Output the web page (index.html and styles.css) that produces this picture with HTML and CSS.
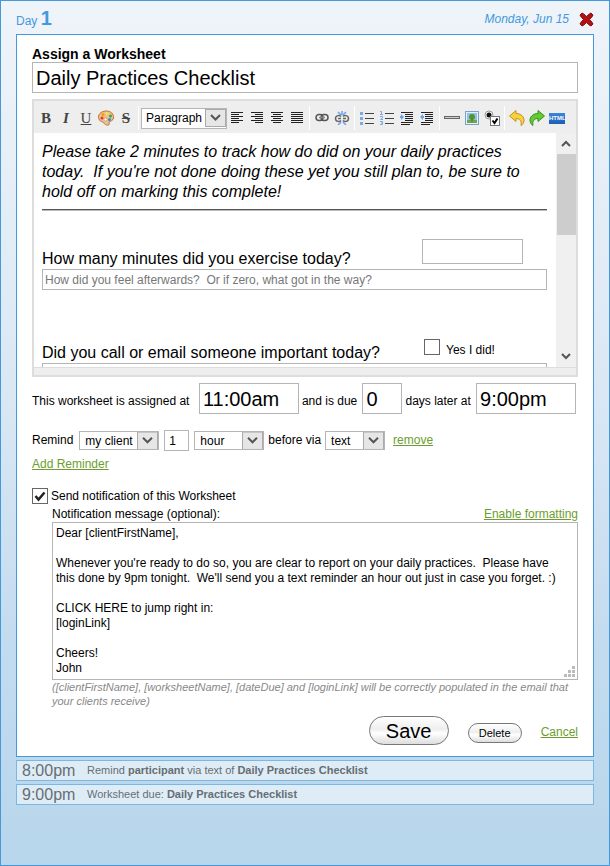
FILE: index.html
```html
<!DOCTYPE html>
<html lang="en">
<head>
    <meta charset="UTF-8">
    <meta name="viewport" content="width=device-width, initial-scale=1.0">
    <title>Assign a Worksheet</title>
    <link rel="stylesheet" href="styles.css">
</head>
<body>
    <div class="day">
        <div class="day-header">
            <h1>Day <b>1</b></h1>
            <span class="date">Monday, Jun 15</span>
            <button type="button" class="close" aria-label="Remove day">
                <svg width="15" height="15" viewBox="0 0 15 15"><path d="M1 3 3 1Q4 1 7.500 4.500 11 1 12 1L14 3Q14 4 10.500 7.500 14 11 14 12L12 14Q11 14 7.500 10.500 4 14 3 14L1 12Q1 11 4.500 7.500 1 4 1 3Z" fill="#b01214" stroke="#8c0c10"/></svg>
            </button>
        </div>

        <form class="panel">
            <label class="title-label" for="title">Assign a Worksheet</label>
            <input type="text" id="title" class="big" value="Daily Practices Checklist">

            <div class="editor">
                <div class="toolbar">
                    <button type="button" class="glyph bold">B</button>
                    <button type="button" class="glyph italic">I</button>
                    <button type="button" class="glyph underline">U</button>
                    <button type="button" aria-label="Text color">
                        <svg width="18" height="16" viewBox="0 0 18 16"><path d="M2 9C0 5 4 1 9 1c5 0 8 3 7.500 7-.5 3-3 3-4 3.500-1 1 .5 2.500-1 3.500-3 1-5-3-7-3.500C3 11 2.500 10.500 2 9Z" fill="#eec08c" stroke="#b97532"/><circle cx="5" cy="8" r="1.500" fill="#e33"/><circle cx="6" cy="4.500" r="1.500" fill="#f39a25"/><circle cx="10" cy="3.500" r="1.500" fill="#f4e53b"/><circle cx="13.500" cy="6" r="1.500" fill="#35a853"/><circle cx="12.500" cy="9.500" r="1.500" fill="#3187d8"/><circle cx="8.500" cy="9.500" r="1.500" fill="#fff" stroke="#b97532" stroke-width=".5"/></svg>
                    </button>
                    <button type="button" class="glyph strike">S</button>
                    <span class="sep"></span>
                    <select class="format" aria-label="Format"><option>Paragraph</option></select>
                    <button type="button" aria-label="Align left">
                        <svg width="12" height="12" viewBox="0 0 12 12" stroke="#222"><path d="M0 .5h12M0 2.500h8M0 4.500h12M0 6.500h8M0 8.500h12M0 10.500h8"/></svg>
                    </button>
                    <button type="button" aria-label="Align right">
                        <svg width="12" height="12" viewBox="0 0 12 12" stroke="#222"><path d="M0 .5h12M4 2.500h8M0 4.500h12M4 6.500h8M0 8.500h12M4 10.500h8"/></svg>
                    </button>
                    <button type="button" aria-label="Align center">
                        <svg width="12" height="12" viewBox="0 0 12 12" stroke="#222"><path d="M0 .5h12M2 2.500h8M0 4.500h12M2 6.500h8M0 8.500h12M2 10.500h8"/></svg>
                    </button>
                    <button type="button" aria-label="Justify">
                        <svg width="12" height="12" viewBox="0 0 12 12" stroke="#222"><path d="M0 .5h12M0 2.500h12M0 4.500h12M0 6.500h12M0 8.500h12M0 10.500h12"/></svg>
                    </button>
                    <span class="sep"></span>
                    <button type="button" aria-label="Insert link">
                        <svg width="14" height="14" viewBox="0 0 14 14" fill="none" stroke="#555" stroke-width="1.500"><rect x="1" y="3.500" width="7" height="6" rx="3"/><rect x="6" y="3.500" width="7" height="6" rx="3"/><path d="M4 6.500h6" stroke="#888"/></svg>
                    </button>
                    <button type="button" aria-label="Remove link">
                        <svg width="16" height="14" viewBox="0 0 16 14" fill="none"><path d="M7 5.500C6 4 1.500 4 1.500 7.500S6 11 7 9.500M4 7.500h3M9 5.500C10 4 14.500 4 14.500 7.500S10 11 9 9.500M9 7.500h3" stroke="#666" stroke-width="1.500"/><path d="M4 1l3 3M8 0v4M12 1 9 4M4 14l3-3M12 14l-3-3" stroke="#6aa3ee" stroke-width="1.500"/></svg>
                    </button>
                    <span class="sep"></span>
                    <button type="button" aria-label="Bulleted list">
                        <svg width="14" height="14" viewBox="0 0 14 14"><path d="M0 1h3v3H0zM0 6h3v3H0zM0 11h3v3H0z" fill="#7fa9e4"/><path d="M5 2.500h9M5 7.500h9M5 12.500h9" stroke="#444"/></svg>
                    </button>
                    <button type="button" aria-label="Numbered list">
                        <svg width="14" height="14" viewBox="0 0 14 14" fill="none"><path d="M0 .5h1.500v3M0 3.500h3M0 5.500h2.500v1.500L.5 8.500H3M0 10.500h2.500v3H0M1 12h1.500" stroke="#7fa9e4"/><path d="M5 2.500h9M5 7.500h9M5 12.500h9" stroke="#444"/></svg>
                    </button>
                    <button type="button" aria-label="Indent">
                        <svg width="14" height="13" viewBox="0 0 14 13"><path d="M1 .5h12M5 2.500h8M5 4.500h8M5 6.500h8M5 8.500h8M1 10.500h12M1 12.500h9" stroke="#222"/><path d="M0 4h1V2l3 3-3 3V6H0z" fill="#6aa3ee"/></svg>
                    </button>
                    <button type="button" aria-label="Outdent">
                        <svg width="14" height="13" viewBox="0 0 14 13"><path d="M1 .5h12M5 2.500h8M5 4.500h8M5 6.500h8M5 8.500h8M1 10.500h12M1 12.500h9" stroke="#222"/><path d="M4 4H3V2L0 5l3 3V6h1z" fill="#6aa3ee"/></svg>
                    </button>
                    <span class="sep"></span>
                    <button type="button" aria-label="Horizontal rule">
                        <svg width="16" height="4" viewBox="0 0 16 4"><rect x=".5" y=".5" width="15" height="2" fill="#ccc" stroke="#666"/></svg>
                    </button>
                    <button type="button" aria-label="Insert image">
                        <svg width="14" height="14" viewBox="0 0 14 14"><rect x=".5" y=".5" width="13" height="13" fill="#e8f0fa" stroke="#7f9fc9"/><path d="M2 2h10v10H2z" fill="#8fc1f0"/><path d="M2 9h10v3H2z" fill="#6aa84f"/><circle cx="7" cy="6" r="3" fill="#4d9a2c"/><path d="M7 8v3" stroke="#8a5a1a"/></svg>
                    </button>
                    <button type="button" aria-label="Insert field">
                        <svg width="16" height="16" viewBox="0 0 16 16"><circle cx="5" cy="5" r="4" fill="#fff" stroke="#999"/><circle cx="5" cy="5" r="2.500" fill="#111"/><rect x="6.500" y="6.500" width="9" height="9" fill="#fff" stroke="#777"/><path d="m8.500 10.500 2 2.500 3-4.500" fill="none" stroke="#000" stroke-width="2"/></svg>
                    </button>
                    <span class="sep"></span>
                    <button type="button" aria-label="Undo">
                        <svg width="16" height="16" viewBox="0 0 16 16"><path d="M.5 6 7 .5v3c5 0 8.500 3.500 8 7.500-.5 2.500-1.500 3.500-3 4.500 1-4-1-7-5-7v3z" fill="#f7d23c" stroke="#c0921c"/></svg>
                    </button>
                    <button type="button" aria-label="Redo">
                        <svg width="16" height="16" viewBox="0 0 16 16"><path d="M15.500 6 9 .5v3C4 3.500.5 7 1 11c.5 2.500 1.500 3.500 3 4.500-1-4 1-7 5-7v3z" fill="#62cc2e" stroke="#3a8c24"/></svg>
                    </button>
                    <button type="button" class="source"><span>HTML</span></button>
                </div>
                <div class="editor-body">
                    <div class="document">
                        <p class="intro">Please take 2 minutes to track how do did on your daily practices today.&nbsp; If you're not done doing these yet you still plan to, be sure to hold off on marking this complete!</p>
                        <hr>
                        <div class="question">
                            <label for="minutes">How many minutes did you exercise today?</label>
                            <div class="answer"><input type="text" id="minutes"></div>
                        </div>
                        <input type="text" class="comment" aria-label="Exercise comment" placeholder="How did you feel afterwards?&nbsp; Or if zero, what got in the way?">
                        <div class="question">
                            <span>Did you call or email someone important today?</span>
                            <div class="answer check"><input type="checkbox" id="called"><label for="called">Yes I did!</label></div>
                        </div>
                        <input type="text" class="comment" aria-label="Call comment">
                    </div>
                    <div class="scrollbar">
                        <svg width="10" height="7" viewBox="0 0 10 7"><path d="m1 6 4-4 4 4" fill="none" stroke="#555" stroke-width="2"/></svg>
                        <div class="thumb"></div>
                        <svg width="10" height="7" viewBox="0 0 10 7"><path d="m1 1 4 4 4-4" fill="none" stroke="#555" stroke-width="2"/></svg>
                    </div>
                </div>
                <div class="statusbar"></div>
            </div>

            <div class="schedule">
                <label class="assigned-label" for="assigned">This worksheet is assigned at</label>
                <input type="text" id="assigned" class="big time-input" value="11:00am">
                <label for="days">and is due</label>
                <input type="text" id="days" class="big days-input" value="0">
                <label for="due">days later at</label>
                <input type="text" id="due" class="big time-input" value="9:00pm">
            </div>

            <div class="reminder">
                <label for="who">Remind</label>
                <select id="who" class="who"><option>my client</option></select>
                <input type="text" class="amount" aria-label="Amount" value="1">
                <select class="unit" aria-label="Unit"><option>hour</option></select>
                <label for="via">before via</label>
                <select id="via" class="via"><option>text</option></select>
                <a href="#" class="remove">remove</a>
            </div>
            <a href="#" class="add">Add Reminder</a>

            <div class="notify">
                <input type="checkbox" id="notify" checked>
                <label for="notify">Send notification of this Worksheet</label>
            </div>
            <div class="message">
                <div class="message-header">
                    <label for="message">Notification message (optional):</label>
                    <a href="#">Enable formatting</a>
                </div>
                <div class="message-box">
                    <textarea id="message" rows="10">Dear [clientFirstName],

Whenever you're ready to do so, you are clear to report on your daily practices.  Please have this done by 9pm tonight.  We'll send you a text reminder an hour out just in case you forget. :)

CLICK HERE to jump right in:
[loginLink]

Cheers!
John</textarea>
                    <svg class="grip" width="11" height="11" viewBox="0 0 11 11" fill="#bbb"><path d="M8 0h3v3H8zM4 4h3v3H4zM8 4h3v3H8zM0 8h3v3H0zM4 8h3v3H4zM8 8h3v3H8z"/></svg>
                </div>
                <p class="hint">([clientFirstName], [worksheetName], [dateDue] and [loginLink] will be correctly populated in the email that your clients receive)</p>
            </div>

            <div class="actions">
                <button type="submit" class="pill save">Save</button>
                <button type="button" class="pill delete">Delete</button>
                <a href="#">Cancel</a>
            </div>
        </form>

        <div class="event">
            <span class="event-time">8:00pm</span>
            <span>Remind <b>participant</b> via text of <b>Daily Practices Checklist</b></span>
        </div>
        <div class="event">
            <span class="event-time">9:00pm</span>
            <span>Worksheet due: <b>Daily Practices Checklist</b></span>
        </div>
    </div>
</body>
</html>
```
FILE: styles.css
```css
* {
    box-sizing: border-box;
}
body {
    margin: 0;
    font-family: "Liberation Sans", Arial, sans-serif;
    font-size: 12px;
    line-height: 15px;
    color: #000;
}
input, select, textarea, button {
    font-family: inherit;
    font-size: 12px;
    color: #000;
    margin: 0;
}
input[type="text"], textarea {
    background: #fff;
    border: 1px solid #b5b5b5;
    border-radius: 0;
    padding: 0 4px;
}
button {
    border: none;
    background: none;
    padding: 0;
}
a {
    color: #6b9e2e;
}
.day {
    min-height: 100vh;
    padding: 0 15px 15px;
    border: 1px solid #4499dd;
    background: linear-gradient(#eff4f9, #dae8f4 45%, #c3dbef 75%, #b7d6eb);
}
.day-header {
    display: flex;
    align-items: center;
    height: 33px;
    padding-top: 4px;
    color: #4499dd;
}
.day-header h1 {
    flex: 1;
    margin: 0;
    font-size: 12px;
    font-weight: normal;
    line-height: 24px;
}
.day-header h1 b {
    font-size: 20px;
}
.date {
    font-style: italic;
}
.close {
    display: flex;
    margin-left: 10px;
}
.panel {
    padding: 11px 15px;
    background: #fff;
    border: 1px solid #4499dd;
}
.title-label {
    display: block;
    font-size: 14px;
    font-weight: bold;
    line-height: 16px;
}
input.big {
    width: 100%;
    height: 31px;
    padding: 1px 3px 0;
    font-size: 20px;
}

/* editor */
.editor {
    margin: 6px 0;
    border: 2px solid #ddd;
}
.toolbar {
    display: flex;
    align-items: center;
    height: 32px;
    padding: 2px 2px 0;
    background: #eee;
}
.toolbar button {
    display: flex;
    align-items: center;
    justify-content: center;
    width: 20px;
    height: 20px;
}
.toolbar .glyph {
    font-family: "Liberation Serif", serif;
    font-size: 15px;
    color: #444;
}
.toolbar .bold {
    font-weight: bold;
}
.toolbar .italic {
    font-style: italic;
    font-weight: bold;
}
.toolbar .underline {
    text-decoration: underline;
}
.toolbar .strike {
    font-weight: bold;
    text-decoration: line-through;
}
.toolbar .sep {
    width: 1px;
    height: 24px;
    margin: 0 2px;
    background: #fff;
}
.source span {
    width: 16px;
    background: linear-gradient(#3b86dd, #1d5db5);
    color: #fff;
    font-size: 6px;
    font-weight: bold;
    line-height: 11px;
    text-align: center;
}
select {
    appearance: none;
    height: 19px;
    padding: 0 21px 0 5px;
    border: 1px solid #b5b5b5;
    border-radius: 0;
    background: #fff url("data:image/svg+xml,%3Csvg xmlns='http://www.w3.org/2000/svg' width='21' height='18'%3E%3Crect x='.5' y='.5' width='20' height='17' fill='%23e6e6e6' stroke='%23aaa'/%3E%3Cpath d='m6 6 4.500 4.500L15 6' fill='none' stroke='%23555' stroke-width='2'/%3E%3C/svg%3E") right center no-repeat;
}
.format {
    width: 86px;
    height: 21px;
    padding-left: 4px;
}
.editor-body {
    display: flex;
    height: 234px;
    overflow: hidden;
}
.document {
    flex: 1;
    padding: 9px 9px 0 8px;
    font-size: 16px;
    line-height: 20px;
}
.intro {
    margin: 0;
    font-style: italic;
}
.document hr {
    height: 2px;
    margin: 7px 0 28px;
    border: none;
    border-top: 1px solid #555;
    background: #bbb;
}
.question {
    display: flex;
    align-items: flex-end;
    justify-content: space-between;
}
.answer {
    width: 125px;
    height: 30px;
}
.answer input[type="text"] {
    display: block;
    width: 101px;
    height: 25px;
}
.comment {
    display: block;
    width: 100%;
    height: 21px;
    margin-bottom: 43px;
}
.document .comment {
    padding: 0 2px;
}
.comment::placeholder {
    color: #777;
    opacity: 1;
}
input[type="checkbox"] {
    appearance: none;
    width: 16px;
    height: 16px;
    border: 1px solid #666;
    background: #fff;
}
input[type="checkbox"]:checked {
    background: #fff url("data:image/svg+xml,%3Csvg xmlns='http://www.w3.org/2000/svg' width='14' height='14'%3E%3Cpath d='m2.500 7 3 3.500 6-7' fill='none' stroke='%23222' stroke-width='2.500'/%3E%3C/svg%3E") center no-repeat;
}
.answer.check {
    display: flex;
    align-items: center;
    gap: 6px;
    padding: 0 0 2px 2px;
}
.answer label {
    padding-top: 5px;
    font-size: 12px;
}
.scrollbar {
    display: flex;
    flex-direction: column;
    align-items: center;
    width: 20px;
    padding: 7px 0;
    background: #f0f0f0;
}
.thumb {
    width: 19px;
    height: 81px;
    margin: 7px 0 auto;
    background: #cdcdcd;
}
.statusbar {
    height: 8px;
    border-top: 1px solid #ddd;
    background: #eee;
}

/* schedule and reminders */
.schedule, .reminder {
    display: flex;
    align-items: center;
}
.schedule {
    gap: 3px;
    margin-bottom: 16px;
    padding-right: 2px;
}
.schedule label {
    flex: 1 0 auto;
    padding-top: 6px;
}
.schedule .assigned-label {
    flex-grow: 3;
}
input.time-input {
    width: 100px;
}
input.days-input {
    width: 40px;
}
.reminder {
    gap: 4px;
    height: 21px;
}
.who {
    width: 80px;
    margin-left: 2px;
}
.reminder .amount {
    width: 25px;
    height: 21px;
    margin: 0 1px;
}
.unit {
    width: 70px;
}
.via {
    width: 60px;
}
.remove {
    margin-left: 4px;
}
.add {
    display: inline-block;
    margin: 6px 0 16px;
}
.notify {
    display: flex;
    align-items: center;
    gap: 3px;
}
.message {
    margin: 3px 0 8px 20px;
}
.message-header {
    display: flex;
    justify-content: space-between;
}
.message-box {
    position: relative;
}
.message-box textarea {
    display: block;
    width: 100%;
    height: 158px;
    padding: 3px 12px 3px 3px;
    line-height: 15px;
    resize: none;
    overflow: hidden;
}
.grip {
    position: absolute;
    right: 3px;
    bottom: 3px;
}
.hint {
    margin: 0;
    color: #888;
    font-size: 11px;
    font-style: italic;
    line-height: 14px;
}
.actions {
    display: flex;
    align-items: flex-end;
    justify-content: flex-end;
    gap: 19px;
}
.actions a {
    padding-bottom: 5px;
}
.pill {
    border: 1px solid #777;
    border-radius: 15px;
    background: linear-gradient(#fff, #eee 45%, #fff 60%, #ddd);
}
.save {
    width: 80px;
    height: 29px;
    font-size: 20px;
    line-height: 24px;
}
.delete {
    width: 54px;
    height: 20px;
    margin-bottom: 2px;
    font-size: 11px;
}

/* other events of the day */
.event {
    display: flex;
    align-items: center;
    height: 21px;
    margin-top: 3px;
    padding-left: 5px;
    border: 1px solid #7ab7e5;
    background: #deecf6;
    color: #666e74;
    font-size: 11px;
}
.event-time {
    width: 65px;
    font-size: 16px;
}
```
